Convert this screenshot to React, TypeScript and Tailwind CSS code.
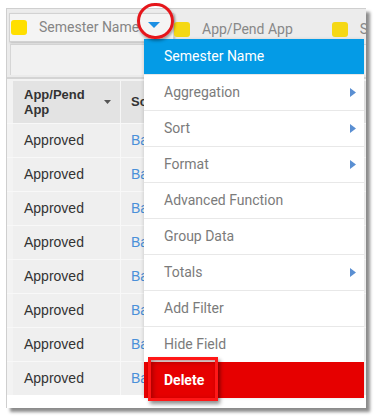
import React from "react"

type MenuItem = {
  label: string
  sub?: boolean
}

const menuItems: MenuItem[] = [
  { label: "Aggregation", sub: true },
  { label: "Sort", sub: true },
  { label: "Format", sub: true },
  { label: "Advanced Function" },
  { label: "Group Data" },
  { label: "Totals", sub: true },
  { label: "Add Filter" },
  { label: "Hide Field" },
]

const rows = Array.from({ length: 8 }, (_, i) => i)

function SubArrow() {
  return (
    <svg width="6" height="9" viewBox="0 0 6 9" className="shrink-0">
      <path d="M0 0 L6 4.5 L0 9 Z" fill="#5a8fd2" />
    </svg>
  )
}

function FieldChip({ label, className }: { label: string; className?: string }) {
  return (
    <div className={"flex items-center " + (className ?? "")}>
      <div className="h-[15px] w-[16px] rounded-[3px] bg-[#f5d814]" />
      <span className="ml-[12px] whitespace-nowrap text-[14px] text-[#888]">{label}</span>
    </div>
  )
}

export default function App() {
  return (
    <div className="relative h-[420px] w-[376px] overflow-hidden bg-white font-['Roboto',sans-serif]">
      <div className="ml-[6px] mt-[8px] h-[400px] w-[360px] overflow-hidden border-l border-t border-[#cfcfcf] bg-white shadow-[4px_4px_3px_rgba(0,0,0,0.45)]">
        {/* field bar */}
        <div className="flex h-[33px] items-start bg-[#ececec]">
          <div className="ml-[2px] mt-[4px] flex h-[29px] w-[165px] shrink-0 items-center border border-[#d2d2d2] bg-[#f4f4f4] pl-[1px] shadow-[1px_1px_2px_rgba(0,0,0,0.2)]">
            <div className="h-[15px] w-[16px] rounded-[3px] bg-[#ffdf00]" />
            <span className="ml-[12px] whitespace-nowrap text-[14px] text-[#858585]">Semester Name</span>
          </div>
          <FieldChip label="App/Pend App" className="mt-[10px]" />
          <FieldChip label="Status" className="ml-[39px] mt-[10px]" />
        </div>

        {/* filter strip */}
        <div className="h-[35px] bg-[#ebebeb] pl-[3px] pt-[2px]">
          <div className="h-[31px] border-l border-t border-[#d6d6d6] bg-[#f1f1f1]" />
        </div>

        {/* table */}
        <div className="border-t-2 border-[#d4d4d4] font-['Liberation_Sans',Arial,sans-serif]">
          <div className="flex h-[44px] bg-[#f3f3f3] pt-[2px]">
            <div className="w-[6px] shrink-0" />
            <div className="flex w-[107px] shrink-0 items-center bg-[#e3e3e3] pl-[11px] pr-[9px]">
              <div className="flex-1 text-[13px] font-bold leading-[15px] text-[#333]">
                App/Pend
                <br />
                App
              </div>
              <svg width="7" height="4" viewBox="0 0 7 4">
                <path d="M0 0 L7 0 L3.5 4 Z" fill="#555" />
              </svg>
            </div>
            <div className="w-[1px] shrink-0 bg-[#f6f6f6]" />
            <div className="flex flex-1 items-center bg-[#e3e3e3] pl-[10px] text-[13px] font-bold text-[#333]">
              School
            </div>
          </div>

          {rows.map((r) => (
            <div key={r} className="flex h-[34px] border-t border-[#f8f8f8] bg-[#efefef]">
              <div className="w-[6px] shrink-0 bg-[#f3f3f3]" />
              <div className="flex w-[107px] shrink-0 items-center pl-[11px] text-[14px] text-[#333]">Approved</div>
              <div className="w-[1px] shrink-0 bg-[#f8f8f8]" />
              <div className="flex flex-1 items-center whitespace-nowrap pl-[10px] text-[14px] text-[#4a90d9]">
                Bachelor of Science Degree&nbsp;&nbsp;&nbsp;&nbsp;&nbsp;&nbsp;&nbsp;&nbsp;&nbsp;&nbsp;&nbsp;&nbsp;&nbsp;&nbsp;&nbsp;&nbsp;&nbsp;&nbsp;&nbsp;&nbsp;&nbsp;&nbsp;&nbsp;&nbsp;&nbsp;&nbsp;&nbsp;&nbsp;&nbsp;&nbsp;&nbsp;&nbsp;&nbsp;&nbsp;&nbsp;&nbsp;e
              </div>
            </div>
          ))}
        </div>
      </div>

      {/* column menu */}
      <div className="absolute left-[144px] top-[39px] w-[220px] bg-white shadow-[-1px_0_3px_rgba(0,0,0,0.12)]">
        <div className="flex h-[35px] items-center bg-[#049be6] pl-[20px] text-[14px] text-white">Semester Name</div>
        {menuItems.map((m) => (
          <div
            key={m.label}
            className="flex h-[36px] items-center justify-between border-t border-[#e8e8e8] pl-[20px] pr-[8px] text-[14px] text-[#7b7b7b]"
          >
            <span>{m.label}</span>
            {m.sub ? <SubArrow /> : null}
          </div>
        ))}
        <div className="flex h-[36px] items-center bg-[#e60000] pl-[20px] text-[14px] font-bold text-white">Delete</div>
      </div>

      {/* dropdown trigger */}
      <svg width="12" height="6" viewBox="0 0 12 6" className="absolute left-[148px] top-[22px]">
        <path d="M0 0 L12 0 L6 6 Z" fill="#1c8fe3" />
      </svg>

      {/* annotations */}
      <div className="absolute left-[137px] top-[3px] h-[36px] w-[37px] rounded-full border-[3px] border-[#e5161b] shadow-[1px_2px_3px_rgba(0,0,0,0.35)]" />
      <div className="absolute left-[148px] top-[357px] h-[44px] w-[70px] border-[3px] border-[#ff1717] shadow-[2px_3px_4px_rgba(0,0,0,0.45),inset_2px_2px_5px_rgba(90,0,0,0.45)]" />
    </div>
  )
}
